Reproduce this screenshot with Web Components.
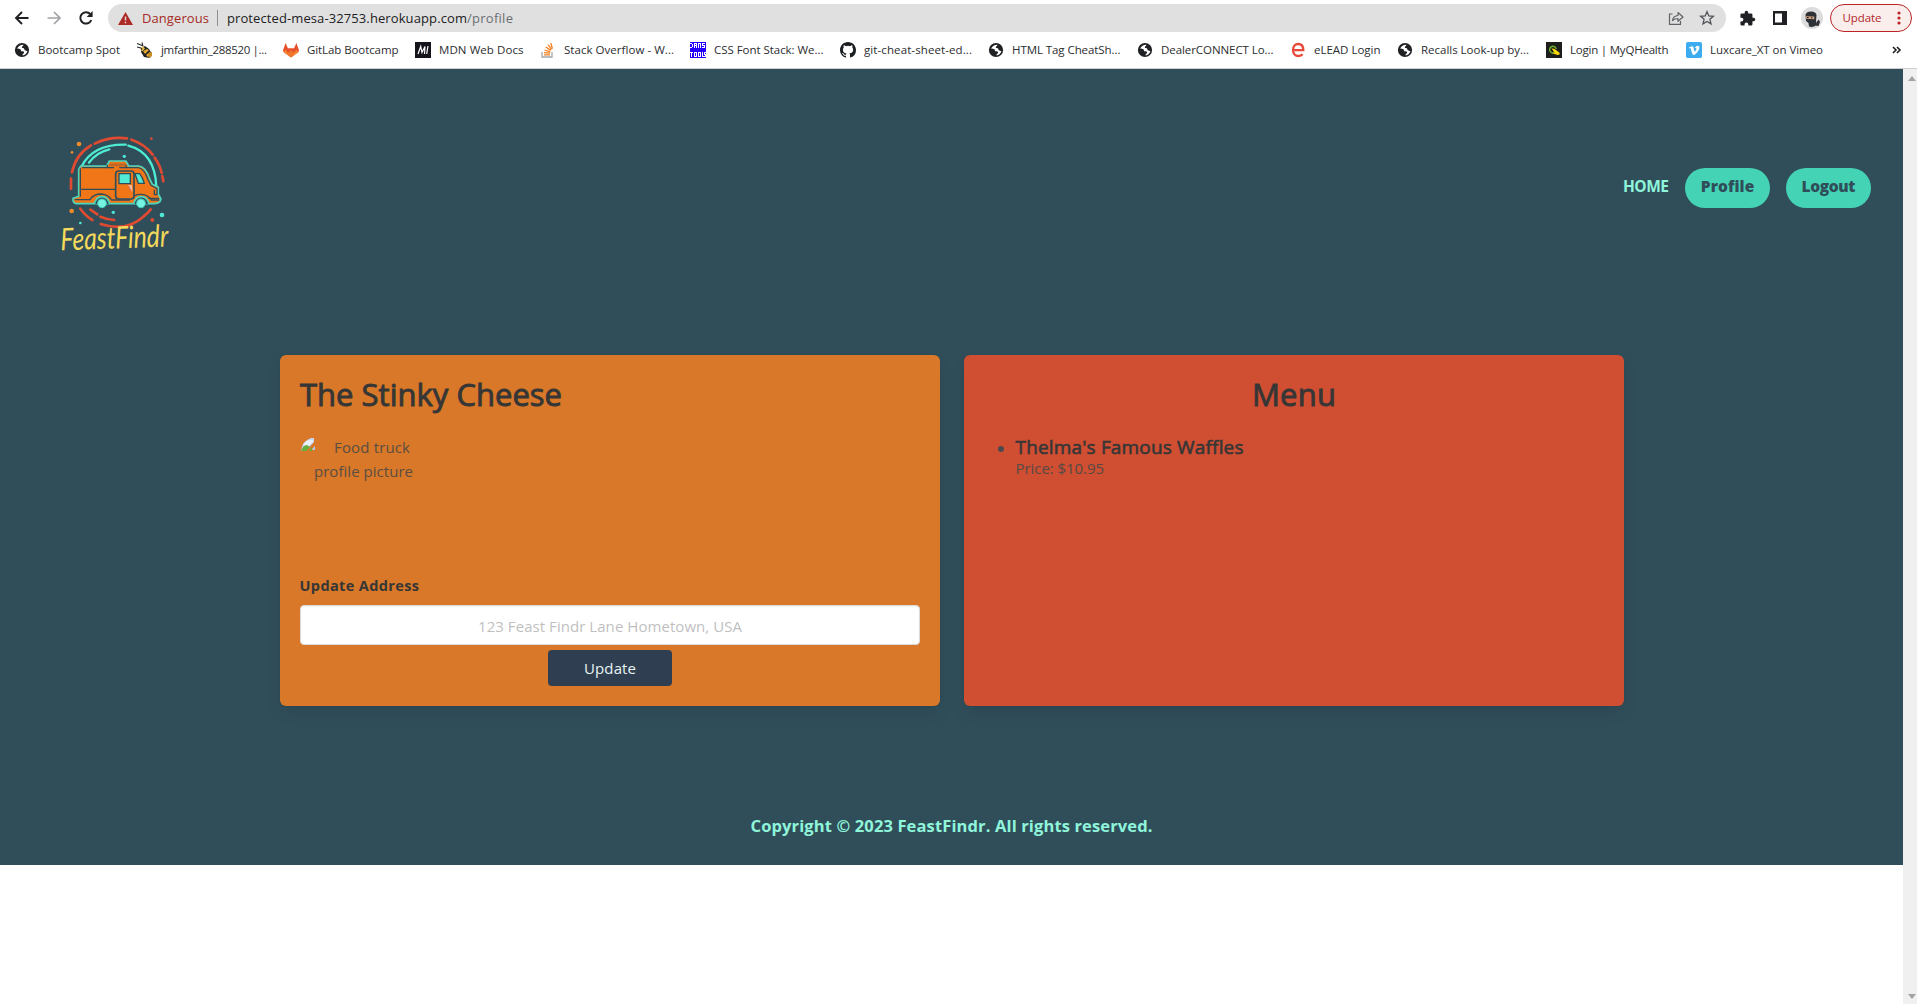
<!DOCTYPE html>
<html lang="en">
<head>
<meta charset="utf-8">
<title>FeastFindr</title>
<style>
html,body{margin:0;height:100%;background:#fff;overflow:hidden}
body{font-family:"Open Sans","Noto Sans",sans-serif;color:#4a4a4a}
</style>
</head>
<body>
<browser-window></browser-window>
<script>
/* Single text line spread evenly over a given width. */
class FitText extends HTMLElement{
  connectedCallback(){
    if(!this.shadowRoot){
      this.attachShadow({mode:'open'}).innerHTML=`<style>:host{display:block;white-space:nowrap;flex:none}</style><slot></slot>`;
    }
    const w=+this.getAttribute('w');
    if(!w)return;
    const r=document.createRange();
    r.selectNodeContents(this);
    const n=this.textContent.length;
    const natural=r.getBoundingClientRect().width;
    this.style.letterSpacing=((w-natural)/Math.max(1,n-1)).toFixed(3)+'px';
    this.style.width=w+'px';
  }
}
customElements.define('fit-text',FitText);

const def=(name,html)=>customElements.define(name,class extends HTMLElement{
  connectedCallback(){
    if(!this.shadowRoot)this.attachShadow({mode:'open'}).innerHTML=html;
  }
});

const svg=(vb,w,h,body)=>`<svg viewBox="${vb}" width="${w}" height="${h}">${body}</svg>`;
const globe=`<circle cx="8" cy="8" r="7.1" fill="#202124"/><path d="M9.2 2.7C7 2.6 4.1 4 3.2 6.6c1 .5 2.300 .1 3.200 .7.8.6.2 1.500 1 1.900.9.4 2-.1 2.600.7.5.8-.6 1.600-1.200 2.200l-.3 1.500c2.200-.2 4.300-2 4.900-4.300-.9-.7-1.700-.4-2.500-1-.7-.6-.2-1.500-1-1.900-.7-.4-1.600 0-2-.8-.3-.8.7-1.500 1.300-1.900z" fill="#fff"/>`;
const icons={
globe,
bee:`<path d="M4 6l4-2 4 3 3 5-2 4-6-1-3-5z" fill="#222"/><path d="M6 9l4-2 2 1-4 4zM9 13l4-3 1 2-3 3z" fill="#e3a92c"/><path d="M0 1.500l5 2M5 .5l1 4M0 5l4 1" stroke="#222" stroke-width="1.100"/><path d="M3 6.500l3-2 2 2-3 3z" fill="#f4c451"/><circle cx="4.600" cy="6.800" r=".9" fill="#222"/><path d="M11 11l4-1v4l-3 2z" fill="#c98f24"/>`,
gitlab:`<path d="M8 15.500L.5 10 0 8.300 2.600 1 4.900 6.300h6.200L13.400 1 16 8.300l-.5 1.700z" fill="#e8502c"/><path d="M8 15.500L.5 10 2.700 7.800zM8 15.500l7.500-5.500-2.200-2.200z" fill="#f3832f"/><path d="M4.700 10.700L8 8.200l3.300 2.500L8 15.500z" fill="#f7a12d" opacity=".45"/>`,
mdn:`<rect width="16" height="16" fill="#15141a"/><path d="M3 12L5.700 4.500 7 10.500 10 4.500 9.500 12M13 4l-1.300 8" stroke="#fff" stroke-width="1.200" fill="none"/>`,
so:`<path d="M2 10v5h10v-5" fill="none" stroke="#a3a6a9" stroke-width="1.300"/><path d="M4 12.800h6M4 10.600l6 .6M4.500 8l5.800 1.800M5.800 5l5 3.400M8 2.600l3.600 4.800M10.800 1l1.600 5.700" stroke="#f48024" stroke-width="1.300"/>`,
dans:`<rect width="16" height="16" fill="#2400ff"/><g shape-rendering="crispEdges"><path d="M0 1h2v1h1v3H2v1H0V5h1.500V2H0zM4 1h3v5H6V4H5v2H4zM5 2v1h1V2zM8 1h3v5h-1V2H9v4H8zM12 1h3v1h-2v1h2v3h-3V5h2V4h-2zM0 10h3v1H2v4H1v-4H0zM4 10h3v5H4zM5 11v3h1v-3zM8 10h3v5H8zM9 11v3h1v-3zM12 10h1v4h1v1h-2zM14 10h2v1h-1v1h1v3h-2v-1h1v-1h-1z" fill="#fff" fill-rule="evenodd"/></g>`,
github:`<path fill="#1b1f23" d="M8 0C3.580 0 0 3.580 0 8c0 3.540 2.290 6.530 5.470 7.590.4.070.55-.17.55-.38 0-.19-.01-.82-.01-1.490-2.010.37-2.530-.49-2.690-.94-.09-.23-.48-.94-.82-1.130-.28-.15-.68-.52-.01-.53.63-.01 1.080.58 1.230.82.72 1.210 1.870.87 2.330.66.070-.52.28-.87.510-1.070-1.780-.2-3.640-.89-3.640-3.950 0-.87.310-1.590.82-2.150-.08-.2-.36-1.020.08-2.120 0 0 .67-.21 2.200.82a7.600 7.600 0 014 0c1.530-1.040 2.200-.82 2.200-.82.44 1.100.16 1.920.08 2.120.51.56.82 1.270.82 2.150 0 3.070-1.870 3.750-3.650 3.950.29.25.54.73.54 1.480 0 1.070-.01 1.930-.01 2.200 0 .21.15.46.55.38A8.010 8.010 0 0016 8c0-4.420-3.580-8-8-8z"/>`,
e:`<path d="M3 8.200h10.300C13.300 4.500 11.500 2 8.200 2 5 2 3 4.700 3 8s2 6 5.400 6c1.800 0 3.300-.6 4.200-1.700" fill="none" stroke="#e8493a" stroke-width="2.300"/>`,
myq:`<rect width="16" height="16" fill="#1d1d1b"/><path d="M8.500 10.500A3.300 3.300 0 1 1 10.200 7" fill="none" stroke="#6fae2c" stroke-width="1.500"/><path d="M5.500 6.300l3 .7 4.800 3.500.6 1.800-2.400.6-5-1.600 2-.6z" fill="#ffd800"/>`,
vimeo:`<rect width="16" height="16" rx="1.800" fill="#3cacee"/><path d="M2.800 5.800l.5.700s.9-.7 1.200-.3c.3.400 1.400 4.700 1.800 5.500.3.700 1.200 1.600 2.200 1 1-.7 4.300-3.500 4.900-6.800.6-3.300-4-2.600-4.500.3 1.200-.7 1.900.3 1.300 1.500-.6 1.100-1.200 1.900-1.500 1.900s-.5-.8-.8-2c-.3-1.300-.3-3.500-1.600-3.300-1.200.3-3.500 1.500-3.500 1.500z" fill="#fff"/>`
};
customElements.define('site-icon',class extends HTMLElement{
  connectedCallback(){
    if(this.shadowRoot)return;
    this.attachShadow({mode:'open'}).innerHTML=`<style>:host{display:block;width:16px;height:16px;flex:none}svg{display:block}</style>`+svg('0 0 16 16',16,16,icons[this.getAttribute('name')]);
  }
});

const marks=[[14,'globe','Bootcamp Spot',82],[137,'bee','jmfarthin_288520 |...',106],[283,'gitlab','GitLab Bootcamp',91.500],[415,'mdn','MDN Web Docs',84.500],[540,'so','Stack Overflow - W...',110],[690,'dans','CSS Font Stack: We...',109.500],[840,'github','git-cheat-sheet-ed...',108],[988,'globe','HTML Tag CheatSh...',108.500],[1137,'globe','DealerCONNECT Lo...',112.500],[1290,'e','eLEAD Login',66.500],[1397,'globe','Recalls Look-up by...',108],[1546,'myq','Login | MyQHealth',98.500],[1686,'vimeo','Luxcare_XT on Vimeo',113],[1892]];
def('bookmarks-bar',`<style>
:host{display:flex;padding-left:14px;align-items:center;box-sizing:border-box;border-bottom:1px solid #cdcfd1;height:37px;font-size:11.500px;color:#2b2d30}
.m{display:flex;gap:8px;align-items:center;flex:none}
.m fit-text{padding-bottom:2px}
svg{display:block}
</style>`+marks.slice(0,-1).map((m,i)=>`<div class="m" style="width:${marks[i+1][0]-m[0]}px"><site-icon name="${m[1]}"></site-icon><fit-text w="${m[3]}">${m[2]}</fit-text></div>`).join('')
+svg('0 0 10 8',10,8,'<path d="M1 1l3 3-3 3M5 1l3 3-3 3" fill="none" stroke="#202124" stroke-width="1.600"/>'));

def('browser-toolbar',`<style>
:host{display:flex;height:32px;padding:4px 5px 0 14px;box-sizing:border-box;align-items:center}
svg{display:block;flex:none}
.nav{display:flex;gap:16px;width:94px;align-items:center}
.omni{display:flex;align-items:center;box-sizing:border-box;width:1619px;height:28px;border-radius:14px;background:#e0e0e0;padding:0 11px 0 10px;font-size:13px;color:#202124}
.danger{color:#a52a24;margin-left:9px}
.sep{width:1px;height:16px;background:#8c8e91;margin:0 9px 0 8px}
.path{color:#6b6e72}
.grow{flex:1}
.acts{display:flex;align-items:center;gap:17px;margin-left:13px}
.avatar{margin-left:-3px}
.upd{display:flex;align-items:center;justify-content:space-between;box-sizing:border-box;width:82px;height:28px;border:1.500px solid #bd2324;border-radius:14px;background:#faeeed;padding:0 10px 0 11.500px;color:#b3262a;font-size:11.500px;margin-left:7px}
.upd fit-text{padding-bottom:1px}
</style>
<div class="nav">
${svg('0 0 16 16',16,16,'<path d="M14.500 8H2.500M8 2L2 8l6 6" fill="none" stroke="#202124" stroke-width="1.900"/>')}
${svg('0 0 16 16',16,16,'<path d="M1.500 8h12M8 2l6 6-6 6" fill="none" stroke="#a0a2a5" stroke-width="1.700"/>')}
${svg('0 0 16 16',16,16,'<path d="M13.300 10A5.700 5.700 0 1 1 12.200 4" fill="none" stroke="#202124" stroke-width="2"/><path d="M14.600 1v6H8.600z" fill="#202124"/>')}
</div>
<div class="omni">
${svg('0 0 15 13',15,13,'<path d="M7.500 0L15 13H0z" fill="#ac2a25"/><path d="M7.500 4.500v4M7.500 9.800v1.500" stroke="#e8dada" stroke-width="1.400"/>')}
<fit-text class="danger" w="67">Dangerous</fit-text><div class="sep"></div>
<fit-text w="240">protected-mesa-32753.herokuapp.com</fit-text><fit-text class="path" w="46">/profile</fit-text>
<div class="grow"></div>
${svg('0 0 16 16',16,16,'<path d="M4.500 4H1.500v10.300h11V11" fill="none" stroke="#606367" stroke-width="1.200"/><path d="M4.500 10.500C5 7 7 5.700 10 5.500V2.500L15 7l-5 4.300V8.500C7.500 8.500 6 9 4.500 10.500z" fill="none" stroke="#606367" stroke-width="1.200" stroke-linejoin="round"/>')}
<span style="width:15px"></span>
${svg('0 0 16 16',16,16,'<path d="M8 1.700l1.800 4.200 4.600.4-3.500 3 1.100 4.500L8 11.400 4 13.800l1.100-4.500-3.500-3 4.600-.4z" fill="none" stroke="#505357" stroke-width="1.300"/>')}
</div>
<div class="acts">
${svg('0 0 24 24',17,17,'<path fill="#202124" d="M20.500 11H19V7a2 2 0 0 0-2-2h-4V3.500a2.500 2.500 0 0 0-5 0V5H4a2 2 0 0 0-2 2v3.800h1.500a2.700 2.700 0 0 1 0 5.400H2V20a2 2 0 0 0 2 2h3.800v-1.500a2.700 2.700 0 0 1 5.400 0V22H17a2 2 0 0 0 2-2v-4h1.500a2.500 2.500 0 0 0 0-5z"/>')}
${svg('0 0 14 14',14,14,'<path fill="#202124" fill-rule="evenodd" d="M0 0h14v14H0zM2 2.500v9h7v-9z"/>')}
<svg class="avatar" viewBox="0 0 22 22" width="22" height="22"><circle cx="11" cy="11" r="11" fill="#dcdcdc"/><path d="M4.500 8Q5 4.500 10 4.500T15.500 8L15 14l1 3.500q-3 3.500-8 2l-.5-3.500-2.500-2z" fill="#2d3136"/><path d="M4.800 9.200l8.500.4v2.600l-8-.5z" fill="#cfa180"/><path d="M6 10.500h1.500M10 10.800h1.500" stroke="#1b1b1b"/><path d="M14.500 18.500l1.500-4 1.800-2 1.200 2.500-1.500 4z" fill="#2d3136"/></svg>
</div>
<div class="upd"><fit-text w="39">Update</fit-text>${svg('0 0 4 14',4,14,'<g fill="#bd2324"><circle cx="2" cy="2" r="1.600"/><circle cx="2" cy="7" r="1.600"/><circle cx="2" cy="12" r="1.600"/></g>')}</div>`);

def('feast-logo',`<style>:host{display:block;width:150px;height:150px}svg{display:block;overflow:visible}text{font-family:Lato,sans-serif;font-style:italic;font-weight:400}</style>
${svg('0 0 450 450',150,150,`
<g fill="none" stroke="#e04a30" stroke-width="8" stroke-linecap="round">
<path d="M96 157Q107 103 153 76M164 71Q207 49 261 55M274 59Q313 71 338 104M344 113Q361 137 365 159M367 168L370 184M93 176V206"/>
<path d="M121 266Q137 288 157 300M151 269L172 283M181 290Q202 299 223 300M182 312Q258 337 310 290Q322 281 332 268"/></g>
<g fill="none" stroke="#4eecd2" stroke-width="7" stroke-linecap="round">
<path d="M124 141Q157 72 257 74M265 77Q345 98 349 200M147 128Q169 97 208 88"/></g>
<path d="M122 138H200L208 123H258L266 138H297Q318 141 329 176L337 193L355 202V222L363 237Q360 251 341 251H108Q98 249 99 235L116 229V148Z" fill="#f07618" stroke="#4ad6bd" stroke-width="5"/>
<path d="M126 143H202V134M258 134V143H295Q313 146 325 181L333 196L351 206V224H343V209M325 235H357M104 239H150Q160 222 185 222Q205 224 215 240H268Q282 222 304 223Q324 224 335 240H358" fill="none" stroke="#304e5a" stroke-width="4"/>
<path d="M208 130H255V139H208Z" fill="#c06825"/><path d="M202 143H222M238 143H260" stroke="#304e5a" stroke-width="4"/>
<path d="M121 208H227M121 145V230" stroke="#304e5a" stroke-width="4"/>
<rect x="227" y="153" width="55" height="84" rx="9" fill="#f07618" stroke="#304e5a" stroke-width="5"/>
<path d="M237 161H271V191H237ZM285 161H299Q308 173 313 190H295Z" fill="#52ead4" stroke="#304e5a" stroke-width="4"/>
<path d="M264 196L275 195L278 216Z" fill="#f4c1aa"/><path d="M266 198L272 212" stroke="#d86a63" stroke-width="3"/>
<path d="M164 252A22 22 0 0 1 208 252M282 252A22 22 0 0 1 326 252" fill="#304e5a" stroke="#4ad6bd" stroke-width="5"/>
<g fill="#75f2e0" stroke="#42cfc0" stroke-width="3"><circle cx="186" cy="250" r="13"/><circle cx="303" cy="250" r="13"/></g>
<g fill="#f18a28"><circle cx="117" cy="72" r="7"/><circle cx="96" cy="97" r="4"/><circle cx="95" cy="273" r="7"/></g>
<g fill="#4ee6d4"><circle cx="253" cy="109" r="5"/><circle cx="220" cy="277" r="5"/><circle cx="121" cy="309" r="4"/><circle cx="366" cy="285" r="7"/></g>
<g fill="#d94b33"><circle cx="334" cy="56" r="4"/><circle cx="337" cy="300" r="6"/></g>
<text x="62" y="391" font-size="92" textLength="324" lengthAdjust="spacingAndGlyphs" fill="#f4da5b" transform="rotate(-2 62 391)">FeastFindr</text>`)}`);

def('nav-pill',`<style>:host{display:flex;align-items:center;justify-content:center;width:85px;height:40px;border-radius:20px;background:#44d3b5;color:#304e5a;font-weight:800;font-size:15.500px;line-height:22px}</style><slot></slot>`);

def('site-header',`<style>
:host{display:flex;justify-content:space-between;align-items:flex-start;padding:51px 32px 0 40px;height:286px;box-sizing:border-box}
nav{display:flex;align-items:center;gap:16px;margin-top:48px;color:#8ff5da;font-weight:700;font-size:15.500px;line-height:22px}
nav-pill fit-text,.home{padding-bottom:4px}
</style><feast-logo></feast-logo>
<nav><fit-text class="home" w="46">HOME</fit-text><nav-pill><fit-text w="53.500">Profile</fit-text></nav-pill><nav-pill><fit-text w="54">Logout</fit-text></nav-pill></nav>`);

def('info-card',`<style>:host{display:block;box-sizing:border-box;width:660px;height:351px;padding:20px;border-radius:6px;box-shadow:0 8px 16px -2px rgba(10,10,10,.1),0 0 0 1px rgba(10,10,10,.02)}</style><slot></slot>`);

def('truck-profile',`<style>
:host{display:block}
info-card{background:#d87828}
h2{margin:0;font-size:31px;line-height:39px;padding-bottom:1px;font-weight:400;-webkit-text-stroke:.9px #363636;color:#363636}
.pic{display:flex;height:136px;margin-top:20px;color:#5a4e42;font-size:15px;line-height:24px}
.pic svg{margin:3px 0 0 1px}
.alt{display:flex;flex-direction:column;margin-left:-1px}
.alt .a{margin-left:20px}
label{display:block;color:#363636;font-weight:700;font-size:14.500px;line-height:24px;margin:3px 0 0 -.500px}
.in{display:flex;box-sizing:border-box;height:40px;margin-top:7px;border:1px solid #dbdbdb;border-radius:4px;background:#fff;box-shadow:inset 0 1px 2px rgba(10,10,10,.05);align-items:center;justify-content:center;color:#bfbfbf;font-size:15px;padding-top:2px}
.b{display:flex;width:124px;height:36px;margin:5px auto 0;border-radius:4px;background:#2f3e50;color:#e8f4f4;align-items:center;justify-content:center;font-size:15px}
</style>
<info-card>
<h2><fit-text w="262">The Stinky Cheese</fit-text></h2>
<div class="pic">${svg('0 0 14 13',14,13,'<path d="M0 13Q1 3 10 0h3v4L7.500 10 4 13z" fill="#c4d6f5"/><path d="M2 7q2-4 6-5h4v2L8 8z" fill="#e9f0fc"/><path d="M0 13q2-6 6-6l3 2-4 4zM8 13l3-4v4z" fill="#66ae3e"/><path d="M11 11l3-3v4h-2z" fill="#b6c8e4"/>')}
<div class="alt"><fit-text class="a" w="76">Food truck</fit-text><fit-text w="99">profile picture</fit-text></div></div>
<label><fit-text w="119.500">Update Address</fit-text></label>
<div class="in"><fit-text w="264">123 Feast Findr Lane Hometown, USA</fit-text></div>
<div class="b"><fit-text w="52">Update</fit-text></div>
</info-card>`);

def('truck-menu',`<style>
:host{display:block}
info-card{background:#d04e32}
h2{display:flex;justify-content:center;margin:0;font-size:31px;line-height:39px;padding-bottom:1px;font-weight:400;-webkit-text-stroke:.9px #363636;color:#363636}
.i{display:flex;margin:21px 0 0 14px;gap:12px}
.dot{width:6px;height:6px;border-radius:50%;background:#4a4a4a;margin-top:10px}
.n{font-size:19px;line-height:23px;font-weight:400;-webkit-text-stroke:.6px #363636;color:#363636;margin-left:-.500px}
.p{font-size:15px;line-height:18px;color:#554a45;margin-left:-.500px}
</style>
<info-card><h2><fit-text w="84">Menu</fit-text></h2>
<div class="i"><div class="dot"></div><div><fit-text class="n" w="228">Thelma's Famous Waffles</fit-text><fit-text class="p" w="88.500">Price: $10.95</fit-text></div></div></info-card>`);

def('page-view',`<style>
:host{display:block;width:1903px;height:796px;background:#304e5a}
main{display:flex;justify-content:center;gap:24px;padding-left:1px;height:351px}
footer{display:flex;justify-content:center;margin-top:107px;color:#8ff5da;font-size:16.500px;line-height:26px;font-weight:700}
</style>
<site-header></site-header>
<main><truck-profile></truck-profile><truck-menu></truck-menu></main>
<footer><fit-text w="402">Copyright © 2023 FeastFindr. All rights reserved.</fit-text></footer>`);

def('scroll-rail',`<style>:host{display:flex;flex-direction:column;justify-content:space-between;align-items:center;box-sizing:border-box;width:14px;background:#f0f0f0;padding:7px 0 5px 3px}svg{display:block}</style>
${svg('0 0 8 5',8,5,'<path d="M0 5l4-5 4 5z" fill="#a3a3a3"/>')}${svg('0 0 8 5',8,5,'<path d="M0 0l4 5 4-5z" fill="#a3a3a3"/>')}`);

def('browser-window',`<style>
:host{display:flex;flex-direction:column;width:1917px;height:1004px}
.v{display:flex;flex:1;justify-content:space-between}
</style><browser-toolbar></browser-toolbar><bookmarks-bar></bookmarks-bar>
<div class="v"><page-view></page-view><scroll-rail></scroll-rail></div>`);
</script>
</body>
</html>
